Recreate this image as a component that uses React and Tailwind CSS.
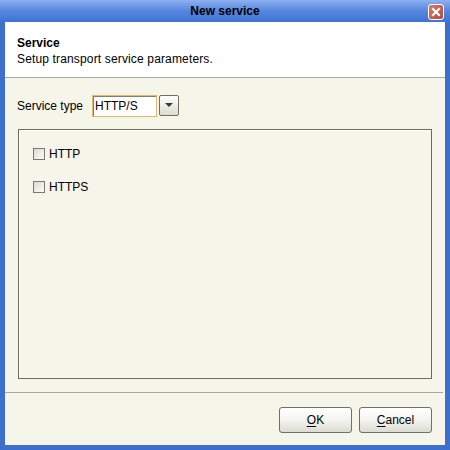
import React from "react";

function Checkbox({ label }) {
  return (
    <div className="flex items-center h-[14px]">
      <div className="w-[12px] h-[12px] border border-[#7a7a6c] bg-gradient-to-br from-[#dcdcd4] to-[#fbfbf9]" />
      <span className="ml-[4px] text-[12px] text-black leading-none">{label}</span>
    </div>
  );
}

function Button({ children }) {
  return (
    <div className="w-[73px] h-[26px] rounded-[3px] border border-[#6f6f6f] bg-gradient-to-b from-[#ffffff] via-[#f4f4f0] to-[#dcdcd4] flex items-center justify-center text-[12px] text-black">
      {children}
    </div>
  );
}

export default function App() {
  return (
    <div
      className="w-[450px] h-[450px] flex flex-col bg-[#f5f5ea]"
      style={{ fontFamily: '"Liberation Sans", Arial, sans-serif' }}
    >
      <div className="h-[22px] relative flex items-center justify-center bg-gradient-to-b from-[#8db0f0] via-[#5686de] to-[#3f72d2]">
        <span className="text-[12px] font-bold text-black">New service</span>
        <div className="absolute right-[6px] top-[4px] w-[16px] h-[16px] rounded-[3px] border border-white bg-gradient-to-br from-[#d87b6c] to-[#b24a3a] flex items-center justify-center">
          <svg width="10" height="10" viewBox="0 0 10 10">
            <path d="M2 2 L8 8 M8 2 L2 8" stroke="white" strokeWidth="2.2" strokeLinecap="square" />
          </svg>
        </div>
      </div>
      <div className="flex-1 flex flex-col border-l-[5px] border-r-[5px] border-b-[5px] border-[#3d6fcd]">
        <div className="h-[56px] bg-white border-b border-[#a8a8a0] pl-[12px] pt-[14px]">
          <div className="text-[12px] font-bold text-black leading-[14px]">Service</div>
          <div className="text-[12px] text-black leading-[14px] mt-[2px] tracking-[0.15px]">Setup transport service parameters.</div>
        </div>
        <div className="flex items-center pl-[12px] mt-[16px] h-[23px]">
          <span className="text-[12px] text-black">Service type</span>
          <div className="ml-[9px] flex items-center">
            <div className="w-[65px] h-[22px] border border-[#e2b86a] bg-white flex items-center pl-[2px] shadow-[inset_1px_1px_0_#7f7f6f]">
              <span className="text-[12px] text-black">HTTP/S</span>
            </div>
            <div className="ml-[2px] w-[20px] h-[21px] border border-[#6f6f67] rounded-[2px] bg-gradient-to-b from-white to-[#dcdcd2] flex items-center justify-center">
              <svg width="8" height="5" viewBox="0 0 8 5">
                <path d="M0 0 H8 L4 4 Z" fill="#3a3a3a" />
              </svg>
            </div>
          </div>
        </div>
        <div className="mx-[13px] mt-[12px] h-[250px] border border-[#6a6a5e] shadow-[inset_1px_1px_0_#ffffff] flex flex-col gap-[19px] pl-[14px] pt-[17px]">
          <Checkbox label="HTTP" />
          <Checkbox label="HTTPS" />
        </div>
        <div className="mt-[13px] h-px bg-[#a8a8a0] mr-[2px]" />
        <div className="flex justify-end gap-[7px] pr-[13px] pt-[14px]">
          <Button>
            <span className="underline underline-offset-2">O</span>K
          </Button>
          <Button>
            <span className="underline underline-offset-2">C</span>ancel
          </Button>
        </div>
      </div>
    </div>
  );
}
